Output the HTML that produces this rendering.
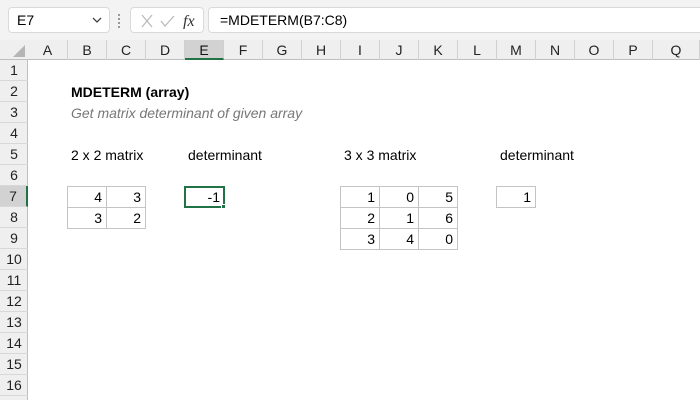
<!DOCTYPE html><html><head><style>
body{margin:0;width:700px;height:400px;overflow:hidden;background:#fff;font-family:"Liberation Sans",Calibri,sans-serif;position:relative}
div{position:absolute;box-sizing:border-box}
.t{font-size:14px;color:#000;white-space:nowrap}
.ch{top:40px;height:20px;font-size:14px;text-align:center;line-height:20px;border-right:1px solid #d0d0d0;color:#222}
.rh{left:0;width:28px;height:21px;font-size:14px;text-align:center;line-height:21px;border-bottom:1px solid #d8d8d8;color:#222}
.c{height:22px;width:40px;border:1px solid #c4c4c4;text-align:right;padding-right:4px;line-height:20px;font-size:14px}
</style></head><body>
<div style="left:0;top:0;width:700px;height:40px;background:#f3f3f3"></div>
<div style="left:8px;top:7px;width:102px;height:26px;background:#fff;border:1px solid #dadada;border-radius:4px;font-size:14px;line-height:24px;padding-left:8px">E7</div>
<svg style="position:absolute;left:92px;top:16px" width="10" height="8"><path d="M1 2L5 6L9 2" stroke="#444" stroke-width="1.3" fill="none"/></svg>
<div style="left:118px;top:14px;width:3px;height:14px;border-left:2px dotted #999"></div>
<div style="left:130px;top:7px;width:74px;height:26px;background:#fff;border:1px solid #dadada;border-radius:4px"></div>
<svg style="position:absolute;left:140px;top:13px" width="60" height="16"><path d="M2 2L12 14M12 2L2 14" stroke="#bbb" stroke-width="1.3" fill="none"/><path d="M21 8L25 13L34 3" stroke="#bbb" stroke-width="1.3" fill="none"/><text x="43" y="13" font-family="Liberation Serif" font-style="italic" font-size="16" fill="#333">fx</text></svg>
<div style="left:208px;top:7px;width:500px;height:26px;background:#fff;border:1px solid #dadada;border-radius:4px;font-size:14px;line-height:24px;padding-left:11px">=MDETERM(B7:C8)</div>
<div style="left:0;top:40px;width:700px;height:20px;background:#efefef;border-bottom:1px solid #bfbfbf"></div>
<div style="left:0;top:60px;width:28px;height:340px;background:#efefef;border-right:1px solid #bfbfbf"></div>
<svg style="position:absolute;left:12px;top:44px" width="14" height="14"><path d="M13 1L13 13L1 13Z" fill="#b5b5b5"/></svg>
<div class="ch" style="left:28px;width:40px">A</div>
<div class="ch" style="left:68px;width:39px">B</div>
<div class="ch" style="left:107px;width:39px">C</div>
<div class="ch" style="left:146px;width:39px">D</div>
<div class="ch" style="left:185px;width:39px;background:#d2d2d2;border-bottom:2px solid #217346;color:#111">E</div>
<div class="ch" style="left:224px;width:39px">F</div>
<div class="ch" style="left:263px;width:39px">G</div>
<div class="ch" style="left:302px;width:39px">H</div>
<div class="ch" style="left:341px;width:39px">I</div>
<div class="ch" style="left:380px;width:39px">J</div>
<div class="ch" style="left:419px;width:39px">K</div>
<div class="ch" style="left:458px;width:39px">L</div>
<div class="ch" style="left:497px;width:39px">M</div>
<div class="ch" style="left:536px;width:39px">N</div>
<div class="ch" style="left:575px;width:39px">O</div>
<div class="ch" style="left:614px;width:39px">P</div>
<div class="ch" style="left:653px;width:47px">Q</div>
<div class="rh" style="top:60px">1</div><div class="rh" style="top:81px">2</div><div class="rh" style="top:102px">3</div><div class="rh" style="top:123px">4</div><div class="rh" style="top:144px">5</div><div class="rh" style="top:165px">6</div>
<div class="rh" style="top:186px;background:#d2d2d2;border-right:2px solid #217346">7</div>
<div class="rh" style="top:207px">8</div><div class="rh" style="top:228px">9</div><div class="rh" style="top:249px">10</div><div class="rh" style="top:270px">11</div><div class="rh" style="top:291px">12</div><div class="rh" style="top:312px">13</div><div class="rh" style="top:333px">14</div><div class="rh" style="top:354px">15</div><div class="rh" style="top:375px">16</div>
<div class="t" style="left:71px;top:84px;font-weight:bold">MDETERM (array)</div>
<div class="t" style="left:71px;top:105px;font-style:italic;color:#777">Get matrix determinant of given array</div>
<div class="t" style="left:71px;top:147px">2 x 2 matrix</div>
<div class="t" style="left:188px;top:147px">determinant</div>
<div class="t" style="left:344px;top:147px">3 x 3 matrix</div>
<div class="t" style="left:500px;top:147px">determinant</div>
<div class="c" style="left:67px;top:186px">4</div><div class="c" style="left:106px;top:186px">3</div>
<div class="c" style="left:67px;top:207px">3</div><div class="c" style="left:106px;top:207px">2</div>
<div class="c" style="left:184px;top:186px;width:41px;height:22px;border:2px solid #217346;line-height:18px;padding-right:3px">-1</div>
<div style="left:221px;top:204px;width:5px;height:5px;background:#217346;border:1px solid #fff"></div>
<div class="c" style="left:340px;top:186px">1</div><div class="c" style="left:379px;top:186px">0</div><div class="c" style="left:418px;top:186px">5</div>
<div class="c" style="left:340px;top:207px">2</div><div class="c" style="left:379px;top:207px">1</div><div class="c" style="left:418px;top:207px">6</div>
<div class="c" style="left:340px;top:228px">3</div><div class="c" style="left:379px;top:228px">4</div><div class="c" style="left:418px;top:228px">0</div>
<div class="c" style="left:496px;top:186px">1</div>
</body></html>
